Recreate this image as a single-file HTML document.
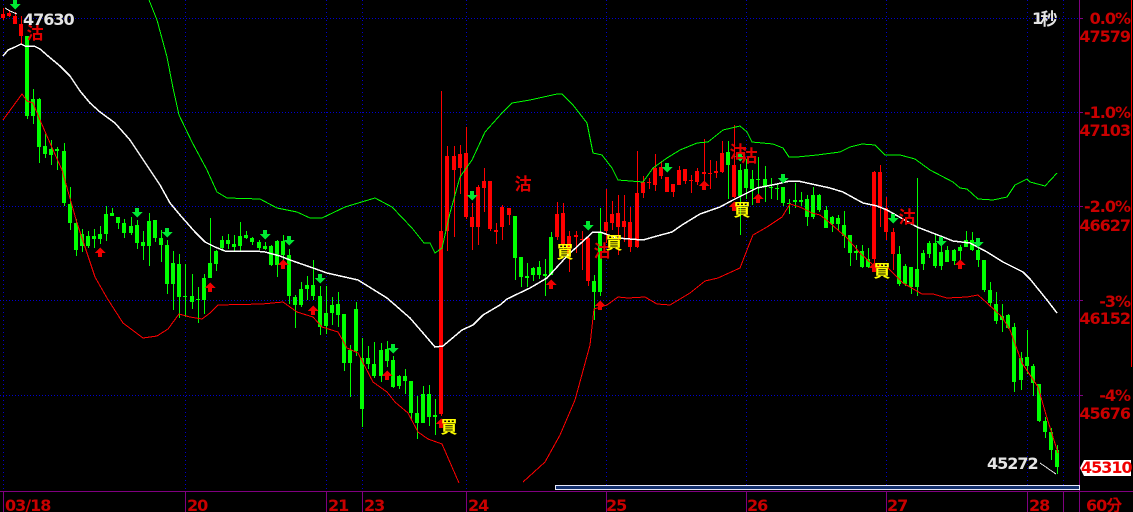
<!DOCTYPE html>
<html><head><meta charset="utf-8"><style>
html,body{margin:0;padding:0;background:#000;width:1133px;height:512px;overflow:hidden}
svg{display:block}
text{font-family:"DejaVu Sans","Liberation Sans","Noto Sans CJK TC",sans-serif;font-weight:700;font-size:16px;letter-spacing:-1px}
.r{fill:#c80000;text-anchor:end}
.d{fill:#c80000}
.w{fill:#e4e4e4}
.c{font-family:"Noto Sans CJK TC","WenQuanYi Zen Hei",sans-serif;font-size:17px;letter-spacing:0;text-anchor:middle}
</style></head><body>
<svg width="1133" height="512" viewBox="0 0 1133 512" shape-rendering="crispEdges">
<rect width="1133" height="512" fill="#000"/>
<g stroke="#0000d0" stroke-width="1" stroke-dasharray="1 2" fill="none">
<path d="M0 18.5H1079M0 112.5H1079M0 206.5H1079M0 300.5H1079M0 395.5H1079"/>
<path stroke-dasharray="1 3" d="M3.5 0V490M185.5 0V490M326.5 0V490M362.5 0V490M466.5 0V490M606.5 0V490M746.5 0V490M886.5 0V490M1027.5 0V490M1063.5 0V490"/>
</g>
<g stroke="#800080" stroke-width="1" fill="none">
<path d="M0 491.5H1133M1079.5 0V512M1079 18.5H1083M1079 112.5H1083M1079 206.5H1083M1079 300.5H1083M1079 395.5H1083"/>
<path d="M3.5 491V512M185.5 491V512M326.5 491V512M362.5 491V512M466.5 491V512M606.5 491V512M746.5 491V512M886.5 491V512M1027.5 491V512M1063.5 491V512"/>
</g>
<path d="M1131.5 0V367" stroke="#f00" fill="none"/>
<rect x="555.5" y="485.5" width="524" height="4" fill="#14306e" stroke="#e8e8f8"/>

<!-- green candles -->
<g fill="none" stroke="#00ff00">
<path transform="translate(.5 0)" d="M27 36V119M33 89V124M39 98V163M45 134V158M51 140V165M57 147V170M64 143V206M70 187V230M76 219V256M82 229V252M88 231V248M94 229V248M100 226V244M106 206V241M112 208V216M118 217V229M124 219V238M131 217V235M137 220V249M143 231V260M149 213V266M155 220V242M161 230V262M167 240V294M173 251V310M179 254V318M185 264V317M192 274V309M198 287V323M204 274V314M210 218V278M216 250V271M222 236V251M228 234V249M234 235V252M240 222V251M246 231V239M252 237V245M259 240V250M265 242V250M271 245V266M277 240V277M283 235V265M289 249V304M295 295V328M301 282V307M307 276V300M313 260V300M320 286V335M326 286V334M332 297V325M338 292V327M344 314V371M350 345V397M356 302V356M362 338V427M368 346V369M374 342V378M381 343V382M387 341V367M393 356V388M399 375V389M405 369V394M411 381V420M417 396V439M423 386V423M429 385V426M435 399V435M515 216V280M521 257V287M527 263V287M533 267V281M539 261V279M545 259V296M551 232V275M594 275V320M600 208V296M728 141V199M740 164V235M746 159V199M752 170V205M758 157V196M765 166V202M771 178V199M777 183V200M783 187V206M789 199V214M795 183V208M801 192V206M807 195V226M813 187V219M819 194V212M826 206V228M832 216V232M838 215V230M844 211V248M850 235V266M856 245V260M862 245V268M868 248V268M899 246V286M905 264V286M911 267V294M917 178V296M923 250V270M929 241V258M935 235V268M941 246V270M947 246V262M954 249V265M960 245V260M966 231V247M972 232V251M978 244V267M984 260V292M990 282V307M996 292V324M1002 304V332M1008 314V329M1014 323V392M1021 352V390M1027 330V374M1033 364V396M1039 384V422M1045 417V438M1051 428V460M1057 445V474"/>
<path stroke-width="4" d="M27 36V116M33 99V116M39 99V147M45 146V154M51 149V155M57 149V151M64 151V203M70 204V223M76 223V250M82 234V246M88 236V246M94 236V239M100 234V239M106 214V234M112 213V216M118 217V223M124 223V233M131 226V233M137 225V243M143 242V246M149 221V246M155 220V238M161 238V245M167 245V284M173 263V284M179 264V297M185 296V297M192 296V302M198 299V300M204 278V300M210 263V278M216 251V264M222 240V248M228 240V244M234 244V247M240 236V246M246 235V238M252 238V242M259 242V248M265 246V249M271 246V265M277 241V265M283 241V255M289 255V296M295 297V305M301 289V305M307 285V289M313 285V296M320 296V327M326 313V326M332 305V313M338 304V315M344 314V363M350 350V363M356 309V351M362 358V409M368 358V364M374 364V376M381 350V376M387 349V361M393 360V387M399 376V386M405 376V381M411 381V413M417 413V423M423 394V423M429 394V417M435 415V417M515 216V258M521 257V277M527 276V278M533 268V275M539 267V275M545 274V276M551 237V275M594 281V292M600 232V292M728 152V165M740 170V196M746 169V188M752 179V189M758 179V180M765 179V186M771 187V188M777 188V189M783 187V203M789 203V204M795 200V202M801 200V202M807 199V217M813 195V217M819 195V210M826 210V228M832 217V224M838 218V224M844 225V236M850 235V253M856 251V253M862 251V267M868 259V267M899 254V284M905 266V284M911 267V287M917 269V287M923 253V264M929 243V254M935 243V266M941 252V266M947 250V262M954 250V261M960 247V251M966 240V247M972 240V250M978 250V260M984 260V290M990 290V303M996 304V321M1002 316V320M1008 315V328M1014 327V382M1021 358V380M1027 357V366M1033 366V383M1039 384V421M1045 421V432M1051 432V450M1057 450V467"/>
</g>
<!-- red candles -->
<g fill="none" stroke="#ff0000">
<path transform="translate(.5 0)" d="M3 8V20M9 10V17M15 12V24M21 16V44M441 91V416M447 146V251M454 146V237M460 145V194M466 127V219M472 203V250M478 185V245M484 168V212M490 181V231M496 223V244M502 205V240M509 208V225M557 202V240M563 203V250M569 231V272M576 231V253M582 231V270M588 237V286M606 189V243M612 201V230M618 195V255M624 195V242M630 207V252M637 151V248M643 176V198M649 178V189M655 154V191M661 161V179M667 177V192M673 184V197M679 166V185M685 169V184M691 175V193M697 168V185M704 139V189M710 160V189M716 161V178M722 141V173M734 125V198M874 171V272M880 165V227M886 197V240M893 228V270"/>
<path stroke-width="4" d="M3 14V18M9 13V16M15 16V24M21 24V36M441 231V414M447 156V231M454 156V170M460 154V168M466 153V217M472 217V227M478 187V227M484 181V188M490 181V229M496 230V232M502 207V227M509 208V215M557 214V237M563 213V245M569 236V254M576 235V237M582 239V240M588 238V281M606 222V231M612 214V223M618 213V227M624 221V227M630 222V247M637 193V247M643 182V193M649 182V183M655 168V185M661 167V176M667 177V192M673 184V192M679 170V185M685 169V181M691 180V181M697 171V182M704 172V174M710 173V174M716 171V173M722 153V172M734 165V197M874 172V259M880 172V208M886 208V232M893 232V254"/>
</g>

<!-- band lines -->
<g fill="none" stroke-width="1">
<polyline stroke="#ffffff" stroke-width="1.5" points="3,56 8,50 15,47 21,44 25,46 34,46 40,49 48,56 60,66 70,76 80,91 90,103 100,112 115,123 130,140 140,155 150,170 160,185 170,203 180,215 195,232 205,242 215,247 225,251 255,251 265,252 280,256 290,260 313,268 327,273 358,280 387,298 410,318 423,333 435,347 443,346 462,330 473,325 483,315 500,305 507,299 530,288 547,278 568,255 593,232 600,232 617,238 630,239 643,240 657,236 672,232 682,225 700,214 720,207 733,200 757,188 777,184 790,181 798,181 830,188 843,192 863,203 877,206 887,210 917,227 943,237 953,241 970,243 987,252 1003,262 1023,272 1030,279 1047,300 1057,313"/>
<polyline stroke="#ffffff" points="5,8 10,11 17,14"/>
<polyline stroke="#00ff00" points="149,0 157,20 167,57 173,88 179,115 192,142 207,170 217,192 227,198 260,199 277,208 297,212 310,218 322,218 345,207 375,198 392,207 412,228 424,243 430,243 435,253 442,248 450,213 460,177 472,160 485,132 502,113 512,103 530,100 557,94 562,94 573,105 587,123 593,153 602,155 612,168 618,180 643,182 653,168 667,158 680,150 697,143 708,142 723,130 740,126 747,132 752,142 773,144 783,148 789,157 797,157 817,155 840,152 850,147 862,144 875,145 885,155 900,155 915,159 930,170 953,182 960,188 967,189 978,199 993,200 1007,197 1015,185 1027,179 1030,182 1045,186 1057,173"/>
<polyline stroke="#ff0000" points="3,120 22,94 27,101 33,103 40,120 50,143 62,170 77,223 95,277 107,298 123,323 143,338 157,336 168,329 179,314 190,317 202,319 210,313 218,305 262,304 283,302 297,312 313,317 322,327 338,332 347,348 358,353 373,382 387,392 395,402 408,413 418,432 428,439 442,444 452,467 459,483"/>
<polyline stroke="#ff0000" points="523,482 545,462 560,435 575,400 590,345 594,309 607,305 618,297 628,298 645,297 657,304 670,305 690,293 705,281 718,278 740,268 747,250 753,235 767,227 782,217 790,204 800,207 812,213 820,215 830,223 847,238 860,253 873,265 887,267 903,283 922,294 933,294 947,298 967,297 978,295 987,303 1002,317 1010,330 1022,363 1038,387 1047,418 1058,453"/>
<path stroke="#e0e0e0" d="M1040 463L1056 474"/>
</g>

<!-- arrows -->
<g fill="#00e832">
<path d="M13 0V4H9.500L15 9.500L20.500 4H17V0Z"/>
<path d="M135 208V212H131.500L137 217.500L142.500 212H139V208Z"/>
<path d="M165 228V232H161.500L167 237.500L172.500 232H169V228Z"/>
<path d="M263 230V234H259.500L265 239.500L270.500 234H267V230Z"/>
<path d="M287 236V240H283.500L289 245.500L294.500 240H291V236Z"/>
<path d="M318 274V278H314.500L320 283.500L325.500 278H322V274Z"/>
<path d="M391 344V348H387.500L393 353.500L398.500 348H395V344Z"/>
<path d="M470 191V195H466.500L472 200.500L477.500 195H474V191Z"/>
<path d="M586 221V225H582.500L588 230.500L593.500 225H590V221Z"/>
<path d="M665 163V167H661.500L667 172.500L672.500 167H669V163Z"/>
<path d="M738 152V156H734.500L740 161.500L745.500 156H742V152Z"/>
<path d="M781 174V178H777.500L783 183.500L788.500 178H785V174Z"/>
<path d="M891 214V218H887.500L893 223.500L898.500 218H895V214Z"/>
<path d="M939 237V241H935.500L941 246.500L946.500 241H943V237Z"/>
<path d="M976 238V242H972.500L978 247.500L983.500 242H980V238Z"/>
</g>
<g fill="#f00000">
<path d="M98 257V253H94.500L100 247.500L105.500 253H102V257Z"/>
<path d="M208 292V288H204.500L210 282.500L215.500 288H212V292Z"/>
<path d="M281 269V265H277.500L283 259.500L288.500 265H285V269Z"/>
<path d="M311 315V311H307.500L313 305.500L318.500 311H315V315Z"/>
<path d="M385 380V376H381.500L387 370.500L392.500 376H389V380Z"/>
<path d="M439 428V424H435.500L441 418.500L446.500 424H443V428Z"/>
<path d="M549 289V285H545.500L551 279.500L556.500 285H553V289Z"/>
<path d="M598 310V306H594.500L600 300.500L605.500 306H602V310Z"/>
<path d="M702 190V186H698.500L704 180.500L709.500 186H706V190Z"/>
<path d="M732 211V207H728.500L734 201.500L739.500 207H736V211Z"/>
<path d="M756 203V199H752.500L758 193.500L763.500 199H760V203Z"/>
<path d="M872 272V268H868.500L874 262.500L879.500 268H876V272Z"/>
<path d="M958 269V265H954.500L960 259.500L965.500 265H962V269Z"/>
</g>

<!-- signal glyphs -->
<g fill="#e00000">
<text class="c" x="35" y="39">沽</text>
<text class="c" x="523" y="190">沽</text>
<text class="c" x="602" y="257">沽</text>
<text class="c" x="738" y="158">沽</text>
<text class="c" x="749" y="162">沽</text>
<text class="c" x="907" y="223">沽</text>
</g>
<g fill="#ffff00">
<text class="c" x="449" y="433">買</text>
<text class="c" x="565" y="258">買</text>
<text class="c" x="614" y="249">買</text>
<text class="c" x="742" y="216">買</text>
<text class="c" x="882" y="277">買</text>
</g>

<!-- labels -->
<text class="w" x="23" y="25">47630</text>
<text class="w" x="987" y="469">45272</text>
<text class="w" x="1032" y="24">1</text>
<text class="c w" x="1049" y="25">秒</text>
<text class="r" x="1130" y="24">0.0%</text>
<text class="r" x="1130" y="42">47579</text>
<text class="r" x="1130" y="118">-1.0%</text>
<text class="r" x="1130" y="136">47103</text>
<text class="r" x="1130" y="212">-2.0%</text>
<text class="r" x="1130" y="231">46627</text>
<text class="r" x="1130" y="307">-3%</text>
<text class="r" x="1130" y="324">46152</text>
<text class="r" x="1130" y="401">-4%</text>
<text class="r" x="1130" y="419">45676</text>
<path d="M1084 460H1131V476H1084L1080 468Z" fill="#fff"/>
<text x="1081" y="473" fill="#f00000">45310</text>
<text class="d" x="5" y="511">03/18</text>
<text class="d" x="187" y="511">20</text>
<text class="d" x="328" y="511">21</text>
<text class="d" x="364" y="511">23</text>
<text class="d" x="468" y="511">24</text>
<text class="d" x="606" y="511">25</text>
<text class="d" x="747" y="511">26</text>
<text class="d" x="887" y="511">27</text>
<text class="d" x="1029" y="511">28</text>
<text class="d" x="1086" y="511">60<tspan style="font-family:'Noto Sans CJK TC',sans-serif;letter-spacing:0">分</tspan></text>
</svg>
</body></html>
